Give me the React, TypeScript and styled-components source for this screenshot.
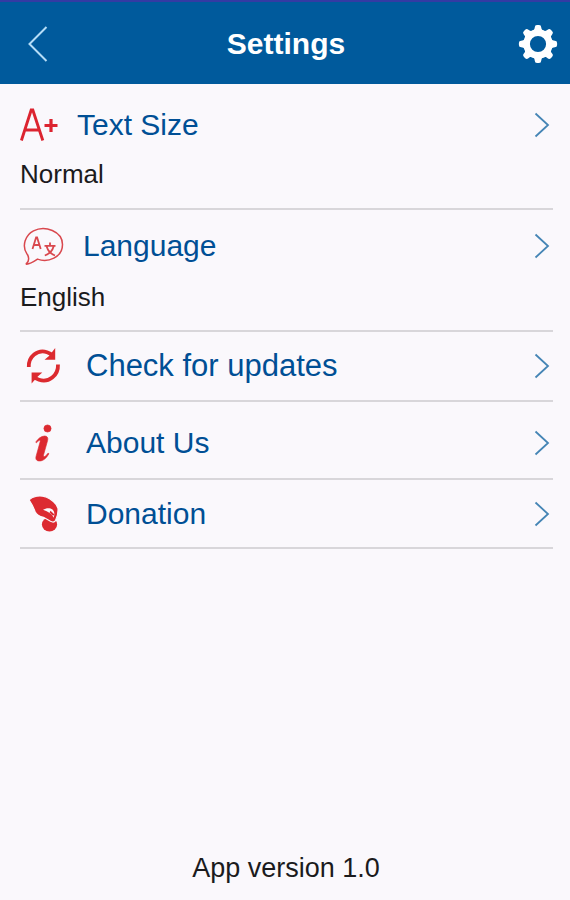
import React from "react";
import styled, { createGlobalStyle } from "styled-components";

const GlobalStyle = createGlobalStyle`
  *, *::before, *::after { box-sizing: border-box; }
  body {
    margin: 0;
    background: #faf8fc;
    color: #1b1b1d;
    font-family: "Liberation Sans", Arial, sans-serif;
  }
  button { font: inherit; color: inherit; background: none; border: 0; padding: 0; cursor: pointer; }
`;

const Screen = styled.div`
  display: flex;
  flex-direction: column;
  min-height: 100vh;
`;

const Header = styled.header`
  display: grid;
  grid-template-columns: 76px 1fr 76px;
  align-items: center;
  height: 84px;
  padding-top: 2px;
  border-top: 2px solid #343ba4;
  background: #005a9c;
  color: #fff;
`;

const Title = styled.h1`
  margin: 0;
  padding-left: 2px;
  font-size: 30px;
  line-height: 36px;
  text-align: center;
`;

const HeaderButton = styled.button<{ $end?: boolean }>`
  display: flex;
  justify-content: ${(p) => (p.$end ? "flex-end" : "center")};
  padding-right: ${(p) => (p.$end ? "12px" : "0")};
`;

const List = styled.ul`
  list-style: none;
  margin: 0;
  padding: 0 17px 0 20px;
`;

const Item = styled.li`
  border-bottom: 2px solid #d8d6da;
`;

const Row = styled.button<{ $height: number; $gap: number; $top: number }>`
  display: grid;
  grid-template-columns: ${(p) => p.$gap}px 1fr 16px;
  align-items: center;
  width: 100%;
  height: ${(p) => p.$height}px;
  padding-top: ${(p) => p.$top}px;
  padding-right: 3px;
  text-align: left;
`;

const RowIcon = styled.span`
  display: flex;
`;

const Label = styled.span<{ $wide?: boolean }>`
  color: #004f95;
  font-size: ${(p) => (p.$wide ? 31 : 30)}px;
  line-height: 36px;
`;

const Value = styled.p<{ $bottom: number }>`
  margin: 0;
  padding-bottom: ${(p) => p.$bottom}px;
  font-size: 26px;
  line-height: 32px;
`;

const Version = styled.footer`
  margin-top: auto;
  padding: 0 0 16px 2px;
  font-size: 27px;
  line-height: 32px;
  text-align: center;
`;

const Chevron = () => (
  <svg width="16" height="26" viewBox="0 0 16 26" fill="none" stroke="#4585b5" strokeWidth="1.8" aria-hidden="true">
    <path d="M1.5 1.5 14 13 1.5 24.5" />
  </svg>
);

const BackIcon = () => (
  <svg width="20" height="36" viewBox="0 0 20 36" fill="none" stroke="#b5ddf7" strokeWidth="2" aria-hidden="true">
    <path d="M18.5 1 1.5 18 18.5 35" />
  </svg>
);

const teeth = [0, 45, 90, 135, 180, 225, 270, 315];

const GearIcon = () => (
  <svg width="40" height="40" viewBox="0 0 40 40" aria-hidden="true">
    <circle cx="20" cy="20" r="11.4" fill="none" stroke="#fff" strokeWidth="6.6" />
    {teeth.map((angle) => (
      <path
        key={angle}
        d="M14.8 7.2Q16.8 5.5 16.8 3.2Q16.8.9 19 .9h2q2.2 0 2.2 2.3Q23.2 5.5 25.2 7.2Z"
        fill="#fff"
        transform={`rotate(${angle} 20 20)`}
      />
    ))}
  </svg>
);

const TextSizeIcon = () => (
  <svg width="40" height="34" viewBox="0 0 40 34" fill="none" stroke="#dc2430" aria-hidden="true">
    <path d="M1.4 32.5 11.2 2h1.6L22.800 32.5M4.6 22h15" strokeWidth="2.900" />
    <path d="M24.5 17.500h13M31 11v13" strokeWidth="3.200" />
  </svg>
);

const LanguageIcon = () => (
  <svg width="46" height="42" viewBox="0 0 46 42" fill="none" stroke="#d9484e" strokeWidth="1.5" aria-hidden="true">
    <path d="M6.8 28.7C1.5 20.800 5.500 9.800 13.500 5.800C25-.2 42.500 6.300 42.500 19.500C42.500 32.500 27.800 38 17.500 34.100C15 35.800 10.500 39 6.600 39.200C6 39 6.200 38.500 7 37.900C8.800 36.300 9.600 31.900 6.800 28.700Z" />
    <path d="m12.500 24 3.600-11.500h1L20.700 24M14 20h5.200" strokeWidth="1.800" />
    <path d="M24.500 20.800h11M30 17.500v3.300M26.500 21c1.300 4.600 4.200 8 8.500 9.500M33.800 21c-1.300 4.600-4.400 8-9 9.500" strokeWidth="1.800" />
  </svg>
);

const UpdateIcon = () => (
  <svg width="46" height="38" viewBox="0 0 46 38" aria-hidden="true">
    <g fill="none" stroke="#dc2a2f" strokeWidth="3.8">
      <path d="M8.800 20C8.300 9.500 17.500 2.200 27 5.200c2.300.7 4.200 1.900 5.500 3.400" />
      <path d="M38 17.500C38.500 28.500 28.500 36.200 19 32.800c-2-.7-3.700-1.800-4.800-3.100" />
    </g>
    <path d="M35.200 1v11.800H24.500L29 9ZM11.600 36.500V25.400h10.700L17.800 29.500Z" fill="#dc2a2f" />
  </svg>
);

const InfoIcon = () => (
  <svg width="46" height="38" viewBox="0 0 46 38" fill="#dc2a31" stroke="#dc2a31" strokeWidth=".6" aria-hidden="true">
    <circle cx="27.500" cy="4.500" r="3.600" />
    <path d="M15.700 18.200c2.300-3.500 5.300-6 8.800-6.200c2.700-.1 3.900 1.800 3.100 4.600l-4 14.200c-.4 1.500.2 2.200 1.300 1.600c1.300-.7 2.200-2 3.200-3.300l.8.600c-2.400 4.300-5.500 7.300-9.300 7.300c-3.200 0-4.300-1.900-3.500-4.800l4-14.400c.4-1.300-.2-1.800-1.200-1.200c-.9.500-1.700 1.300-2.400 2.200Z" />
  </svg>
);

const DonationIcon = () => (
  <svg width="46" height="38" viewBox="0 0 46 38" fill="#dc2a31" aria-hidden="true">
    <ellipse cx="29.500" cy="29.500" rx="7.600" ry="7" />
    <path
      d="M9 4.800C13 1 20 .2 25.500 1.800C30.500 3.600 37.300 8.500 38 13.500C38.300 18 37 22.500 35.500 25.600C34.300 27.500 32.500 27.300 30.500 26.300L23.500 22.300C19.500 21.500 16.500 19.800 15 16.500C13.500 12 11.500 8.500 9 4.800Z"
      stroke="#faf8fc"
      strokeWidth="1.200"
    />
    <path d="M23 14.800C26 12.800 30 12.600 32.500 14.500C34.500 16.500 35 19.500 33.500 22.800C33 21 32 19.800 30 18.300C28 16.800 25.500 15.600 23 14.800Z" fill="#faf8fc" />
    <path d="M30.500 15.800 34.500 19.500 33 20.700 29.500 17.600Z" />
  </svg>
);

type Setting = {
  label: string;
  icon: React.ReactNode;
  height: number;
  gap: number;
  top?: number;
  wide?: boolean;
  value?: string;
  bottom?: number;
};

const settings: Setting[] = [
  { label: "Text Size", icon: <TextSizeIcon />, height: 74, gap: 57, top: 8, value: "Normal", bottom: 18 },
  { label: "Language", icon: <LanguageIcon />, height: 71, gap: 63, value: "English", bottom: 17 },
  { label: "Check for updates", icon: <UpdateIcon />, height: 68, gap: 66, wide: true },
  { label: "About Us", icon: <InfoIcon />, height: 76, gap: 66, top: 6 },
  { label: "Donation", icon: <DonationIcon />, height: 67, gap: 66 },
];

export default function App() {
  return (
    <Screen>
      <GlobalStyle />
      <Header>
        <HeaderButton aria-label="Back"><BackIcon /></HeaderButton>
        <Title>Settings</Title>
        <HeaderButton $end aria-label="Preferences"><GearIcon /></HeaderButton>
      </Header>
      <main>
        <List>
          {settings.map((s) => (
            <Item key={s.label}>
              <Row $height={s.height} $gap={s.gap} $top={s.top ?? 0}>
                <RowIcon>{s.icon}</RowIcon>
                <Label $wide={s.wide}>{s.label}</Label>
                <Chevron />
              </Row>
              {s.value && <Value $bottom={s.bottom ?? 0}>{s.value}</Value>}
            </Item>
          ))}
        </List>
      </main>
      <Version>App version 1.0</Version>
    </Screen>
  );
}
